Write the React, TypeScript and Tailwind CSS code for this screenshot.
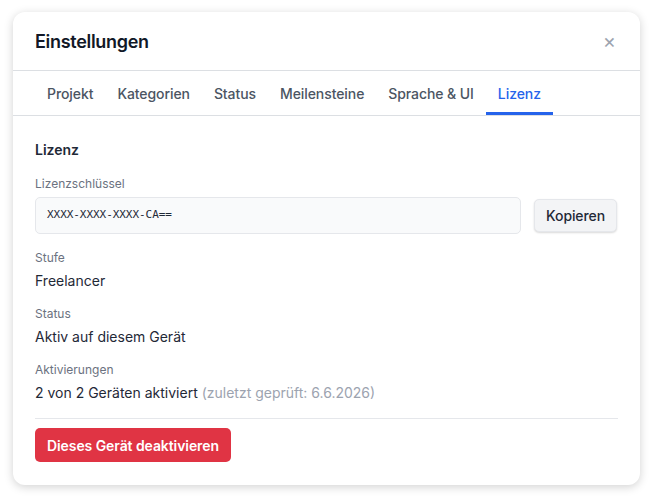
import React from 'react';

const tabs = ['Projekt', 'Kategorien', 'Status', 'Meilensteine', 'Sprache & UI', 'Lizenz'];

const Field: React.FC<{ label: string; children: React.ReactNode }> = ({ label, children }) => (
  <div className="flex flex-col">
    <span className="text-[12px] leading-[16px] text-[#6b7280]">{label}</span>
    <span className="mt-[5px] text-[14px] leading-[20px] text-[#1f2937]">{children}</span>
  </div>
);

const App: React.FC = () => {
  return (
    <div className="min-h-[497px] w-[655px] bg-white px-[13px] pt-[12px] font-['Inter',sans-serif]">
      <div className="flex w-[627px] flex-col rounded-[12px] bg-white shadow-[0_2px_10px_rgba(0,0,0,0.18)]">

        {/* Header */}
        <div className="flex h-[59px] items-center justify-between border-b border-[#dcdfe3] pl-[22px] pr-[24px]">
          <h1 className="text-[18px] font-semibold tracking-[-0.3px] text-[#111827]">Einstellungen</h1>
          <button className="text-[20px] leading-none text-[#9ca3af]">×</button>
        </div>

        {/* Tabs */}
        <div className="flex h-[45px] items-stretch border-b border-[#dcdfe3] px-[22px]">
          {tabs.map((t) => (
            <div
              key={t}
              className={
                t === 'Lizenz'
                  ? 'flex items-center border-b-[3px] border-[#2563eb] px-3 pt-[3px] text-[14px] font-medium tracking-[-0.08px] text-[#2563eb]'
                  : 'flex items-center border-b-[3px] border-transparent px-3 pt-[3px] text-[14px] font-medium tracking-[-0.08px] text-[#4b5563]'
              }
            >
              {t}
            </div>
          ))}
        </div>

        {/* Body */}
        <div className="flex flex-col px-[22px] pb-[23px] pt-[24px]">
          <h2 className="text-[14px] font-semibold leading-[20px] text-[#1f2937]">Lizenz</h2>

          <span className="mt-[16px] text-[12px] leading-[16px] text-[#6b7280]">Lizenzschlüssel</span>
          <div className="mt-[5px] flex items-center gap-[13px] pr-px">
            <div className="flex h-[37px] flex-1 items-center rounded-[5px] border border-[#e5e7eb] bg-[#f9fafb] px-[11px] font-['DejaVu_Sans_Mono',monospace] text-[11px] tracking-[-0.05px] text-[#1f2937]">
              XXXX-XXXX-XXXX-CA==
            </div>
            <button className="h-[33px] rounded-[5px] border border-[#e5e7eb] bg-[#f3f4f6] px-[11px] text-[14px] font-medium tracking-[-0.1px] text-[#1f2937] shadow-[0_1px_2px_rgba(0,0,0,0.15)]">
              Kopieren
            </button>
          </div>

          <div className="mt-[16px] flex flex-col gap-[15px]">
            <Field label="Stufe">Freelancer</Field>
            <Field label="Status">Aktiv auf diesem Gerät</Field>
            <Field label="Aktivierungen">
              2 von 2 Geräten aktiviert <span className="text-[#9ca3af]">(zuletzt geprüft: 6.6.2026)</span>
            </Field>
          </div>

          <div className="mt-[15px] border-t border-[#e5e7eb] pt-[9px]">
            <button className="h-[34px] rounded-[5px] bg-[#e03444] px-[12px] text-[14px] font-semibold tracking-[-0.08px] text-white">
              Dieses Gerät deaktivieren
            </button>
          </div>
        </div>
      </div>
    </div>
  );
};

export default App;
